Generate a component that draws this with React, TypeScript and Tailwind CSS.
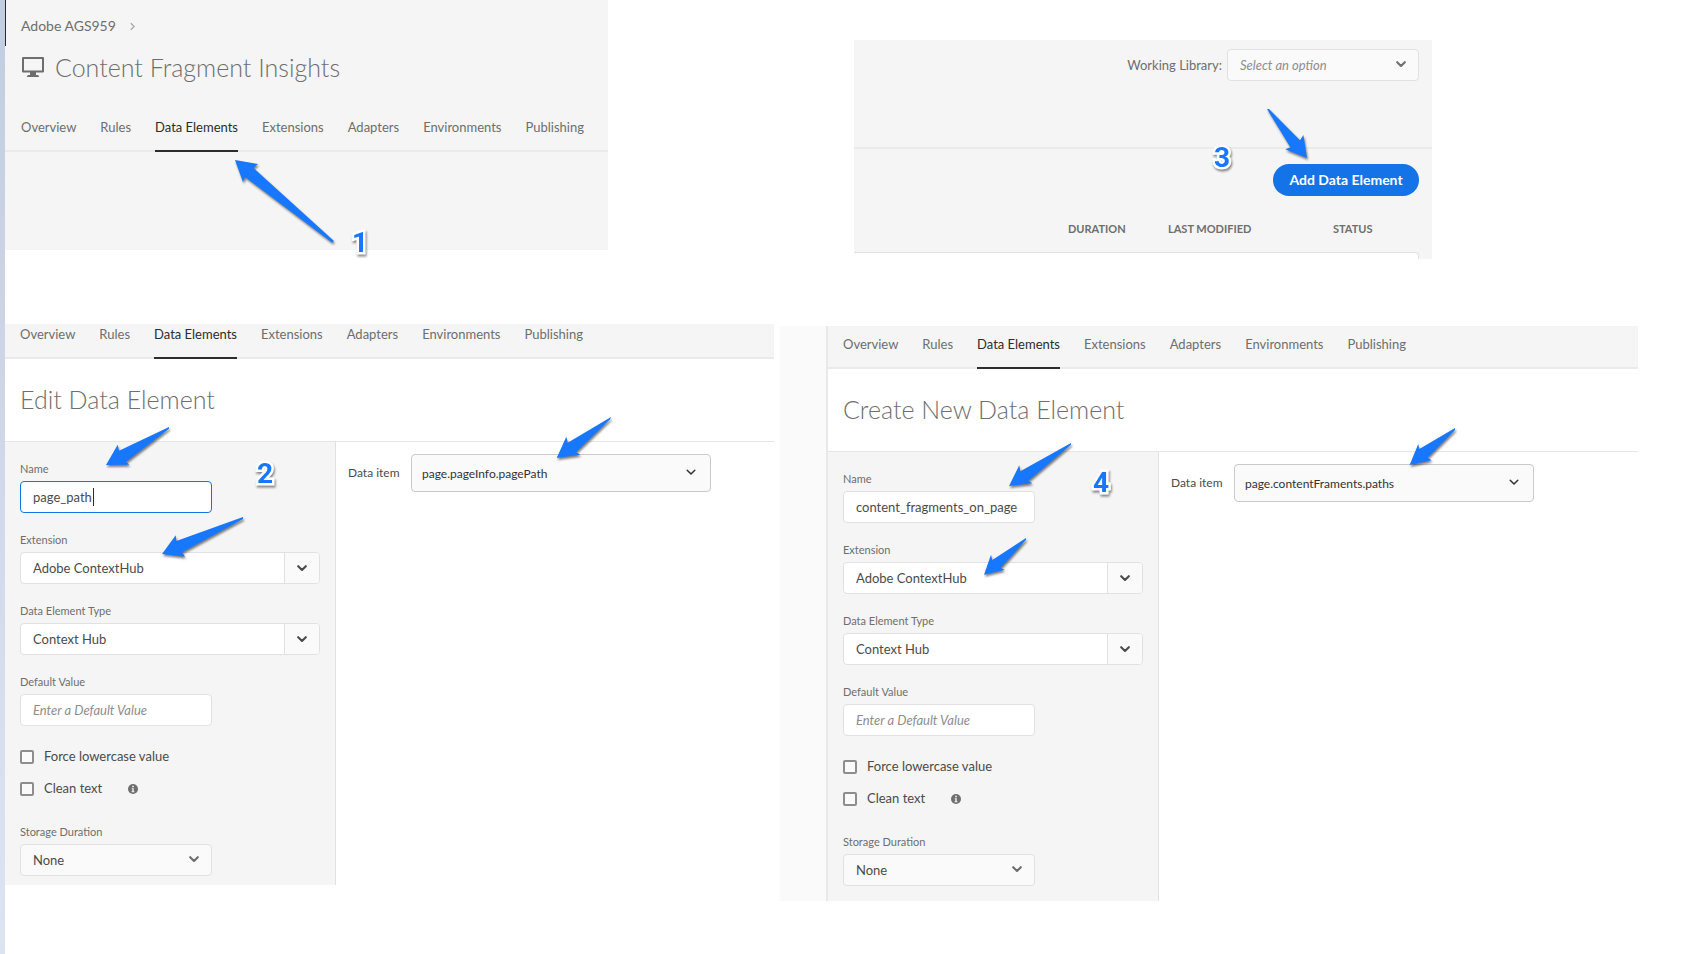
import type { ReactNode } from 'react'
import { useId } from 'react'

const TABS = ['Overview', 'Rules', 'Data Elements', 'Extensions', 'Adapters', 'Environments', 'Publishing']

function Tabs({ className }: { className: string }) {
  return (
    <nav className={`flex gap-6 border-b-2 border-[#eaeaea] text-[13px] leading-5 text-[#6e6e6e] ${className}`}>
      {TABS.map((tab) =>
        tab === 'Data Elements' ? (
          <a key={tab} href="#" aria-current="page" className="-mb-[2px] border-b-2 border-[#2c2c2c] pb-[13px] whitespace-nowrap text-[#2c2c2c]">
            {tab}
          </a>
        ) : (
          <a key={tab} href="#" className="whitespace-nowrap">
            {tab}
          </a>
        ),
      )}
    </nav>
  )
}

function Chevron({ className, thin = false }: { className: string; thin?: boolean }) {
  return (
    <svg viewBox="0 0 10 7" fill="none" stroke="currentColor" strokeLinecap="round" strokeLinejoin="round" className={`h-[7px] w-[10px] ${className}`} aria-hidden="true">
      <path d="M1.2 1.2 5 5 8.8 1.2" strokeWidth={thin ? 1.5 : 2.1} />
    </svg>
  )
}

function Arrow({ points, className }: { points: string; className: string }) {
  return (
    <svg viewBox="0 0 100 90" className={`pointer-events-none absolute z-10 h-[90px] w-[100px] overflow-visible drop-shadow-[1px_2px_1px_rgba(0,0,0,0.5)] ${className}`} aria-hidden="true">
      <polygon points={points} fill="#1877ff" />
    </svg>
  )
}

function Step({ children, className }: { children: ReactNode; className: string }) {
  return (
    <span
      className={`pointer-events-none absolute z-10 font-['Roboto','Liberation_Sans',sans-serif] text-[28px] leading-7 font-bold text-[#1877ff] drop-shadow-[1px_2px_1px_rgba(0,0,0,0.45)] [-webkit-text-stroke:5px_white] [paint-order:stroke_fill] ${className}`}
    >
      {children}
    </span>
  )
}

function Picker({ id, value, className, thin, italic }: { id: string; value: string; className: string; thin?: boolean; italic?: boolean }) {
  return (
    <div className={`relative ${className}`}>
      <select
        id={id}
        className={`size-full appearance-none rounded border bg-[#fafafa] pt-[2px] ${thin ? 'border-[#cacaca] px-[10px] text-xs text-[#323232]' : 'border-[#e1e1e1] px-3 text-[13px]'} ${italic ? 'text-[#8e8e8e] italic' : 'text-[#4b4b4b]'}`}
      >
        <option>{value}</option>
      </select>
      <Chevron thin={thin} className={`pointer-events-none absolute top-1/2 -mt-1 ${thin ? 'right-[15px] text-[#323232]' : 'right-[13px] text-[#6e6e6e]'}`} />
    </div>
  )
}

function Field({ label, id, children }: { label: string; id: string; children: ReactNode }) {
  return (
    <div className="mb-[19px] flex flex-col gap-1">
      <label htmlFor={id} className="text-[11px] leading-4 text-[#6e6e6e]">
        {label}
      </label>
      {children}
    </div>
  )
}

function Combo({ id, value }: { id: string; value: string }) {
  return (
    <div className="flex h-8 overflow-hidden rounded border border-[#e1e1e1] bg-white">
      <input id={id} defaultValue={value} className="min-w-0 flex-1 px-3 pt-[2px] text-[13px] text-[#4b4b4b]" />
      <button type="button" aria-label={`Show options for ${value}`} className="flex w-[35px] items-center justify-center border-l border-[#e1e1e1] bg-[#fafafa] text-[#4b4b4b]">
        <Chevron className="" />
      </button>
    </div>
  )
}

function Check({ id, label, children }: { id: string; label: string; children?: ReactNode }) {
  return (
    <div className="flex h-8 items-center">
      <input id={id} type="checkbox" className="size-[14px] appearance-none rounded-[2px] border-2 border-[#8e8e8e] bg-[#fafafa]" />
      <label htmlFor={id} className="ml-[10px] text-[13px] text-[#4b4b4b]">
        {label}
      </label>
      {children}
    </div>
  )
}

function InfoIcon() {
  return (
    <svg viewBox="0 0 10 10" className="ml-[26px] size-[10px]" aria-hidden="true">
      <circle cx="5" cy="5" r="5" fill="#6e6e6e" />
      <path d="M4.2 1.8h1.6v1.5H4.2zM3.7 4.2h2v3.1h.7v.9H3.6v-.9h.7V5.1h-.6z" fill="#f5f5f5" />
    </svg>
  )
}

interface EditorProps {
  title: string
  name: string
  focused?: boolean
  item: string
  tabs: string
  bottom: string
  overlay: ReactNode
}

function Editor({ title, name, focused, item, tabs, bottom, overlay }: EditorProps) {
  const id = useId()
  return (
    <div className="relative min-w-0 flex-1">
      <Tabs className={`bg-[#f5f5f5] px-[15px] ${tabs}`} />
      <h2 className="border-b border-[#e6e6e6] px-[15px] pt-[21px] pb-[23px] text-[25px] leading-[38px] font-light text-[#6e6e6e]">{title}</h2>
      <div className="flex">
        <form className={`w-[331px] shrink-0 border-r border-[#e1e1e1] bg-[#f5f5f5] px-[15px] pt-[19px] ${bottom}`}>
          <Field label="Name" id={`${id}name`}>
            <div className="relative h-8 w-48">
              <input id={`${id}name`} defaultValue={name} className={`size-full rounded border bg-white px-3 text-[13px] text-[#4b4b4b] ${focused ? 'border-[#1473e6]' : 'border-[#e1e1e1]'}`} />
              {focused && <span className="absolute top-[7px] left-[73px] h-[18px] w-px bg-[#2c2c2c]" />}
            </div>
          </Field>
          <Field label="Extension" id={`${id}ext`}>
            <Combo id={`${id}ext`} value="Adobe ContextHub" />
          </Field>
          <Field label="Data Element Type" id={`${id}type`}>
            <Combo id={`${id}type`} value="Context Hub" />
          </Field>
          <Field label="Default Value" id={`${id}default`}>
            <input id={`${id}default`} placeholder="Enter a Default Value" className="h-8 w-48 rounded border border-[#e1e1e1] bg-white px-3 text-[13px] placeholder:text-[#8e8e8e] placeholder:italic" />
          </Field>
          <div className="-mt-1 mb-[19px]">
            <Check id={`${id}lower`} label="Force lowercase value" />
            <Check id={`${id}clean`} label="Clean text">
              <InfoIcon />
            </Check>
          </div>
          <div className="flex flex-col gap-1">
            <label htmlFor={`${id}dur`} className="text-[11px] leading-4 text-[#6e6e6e]">
              Storage Duration
            </label>
            <Picker id={`${id}dur`} value="None" className="h-8 w-48" />
          </div>
        </form>
        <div className="flex min-w-0 flex-1 items-start px-3 pt-3">
          <label htmlFor={`${id}item`} className="mt-[9px] w-[63px] shrink-0 text-xs leading-5 text-[#4b4b4b]">
            Data item
          </label>
          <Picker id={`${id}item`} value={item} thin className="h-[38px] w-full max-w-[300px]" />
        </div>
      </div>
      {overlay}
    </div>
  )
}

export default function App() {
  return (
    <div className="flex min-h-screen bg-white font-['Lato','Open_Sans',sans-serif]">
      <div className="w-[5px] shrink-0 bg-linear-to-b from-[#c3cde1] to-[#dbe5f2]" />
      <main className="min-w-0 flex-1">
        <div className="grid grid-cols-[603fr_246fr_578fr_258fr] items-start">
          <section className="relative h-[250px] bg-[#f5f5f5]">
            <div className="absolute top-0 left-0 h-[46px] w-px bg-[#2c2c2c]" />
            <div className="flex items-center gap-[14px] px-4 pt-4 text-sm leading-5 text-[#6e6e6e]">
              <a href="#">Adobe AGS959</a>
              <svg viewBox="0 0 6 10" fill="none" stroke="#a8a8a8" strokeWidth="1.6" className="h-[9px] w-[5px]" aria-hidden="true">
                <path d="M1 1l4 4-4 4" />
              </svg>
            </div>
            <div className="flex items-center gap-[11px] px-[17px] pt-3">
              <svg viewBox="0 0 22 20" className="h-5 w-[22px]" fill="#6e6e6e" aria-hidden="true">
                <path fillRule="evenodd" d="M1 0h20a1 1 0 0 1 1 1v13.500a1 1 0 0 1-1 1h-7v2.500h1.500a1.500 1.500 0 0 1 1.500 1.500v.5H5v-.5A1.500 1.500 0 0 1 6.500 18H8v-2.500H1a1 1 0 0 1-1-1V1a1 1 0 0 1 1-1zM2 2v11.500h18V2z" />
              </svg>
              <h1 className="text-[25px] leading-[38px] font-light text-[#6e6e6e]">Content Fragment Insights</h1>
            </div>
            <Tabs className="px-4 pt-[31px]" />
            <Arrow className="top-[150px] left-[225px]" points="5,10 28,14 23.500,18 104,91 102,92.500 15,27 13,32" />
            <Step className="top-[229px] left-[347px]">1</Step>
          </section>

          <section className="relative col-start-3 mt-10 h-[219px] overflow-hidden bg-[#f5f5f5]">
            <div className="flex h-[107px] items-start justify-end gap-[5px] pt-[9px] pr-[13px]">
              <label htmlFor="library" className="text-[13px] leading-8 text-[#6e6e6e]">
                Working Library:
              </label>
              <Picker id="library" value="Select an option" italic className="h-8 w-48" />
            </div>
            <div className="flex justify-end border-t-2 border-[#eaeaea] pt-[15px] pr-[13px]">
              <button type="button" className="h-8 w-[146px] rounded-full bg-[#1473e6] text-sm font-bold text-white">
                Add Data Element
              </button>
            </div>
            <div className="pt-4 pr-[13px]">
              <table className="w-full table-fixed border-separate border-spacing-0">
                <thead>
                  <tr className="h-10 text-left text-[11px] leading-4 font-bold text-[#6e6e6e]">
                    <td />
                    <th className="w-[100px] pb-[6px]">DURATION</th>
                    <th className="w-[165px] pb-[6px]">LAST MODIFIED</th>
                    <th className="w-[86px] pb-[6px]">STATUS</th>
                  </tr>
                </thead>
                <tbody>
                  <tr>
                    <td colSpan={4} className="h-5 rounded-tr border-t border-r border-[#e1e1e1] bg-white" />
                  </tr>
                </tbody>
              </table>
            </div>
            <Arrow className="top-[60px] left-[403px]" points="10,9 12,9 43,40.300 46.400,35 50,58 28.200,49.300 33.400,47.300" />
            <Step className="top-[104px] left-[360px]">3</Step>
          </section>
        </div>

        <div className="mt-[65px] grid grid-cols-[769fr_6fr_858fr_52fr] items-start">
          <section className="flex">
            <Editor
              title="Edit Data Element"
              name="page_path"
              focused
              item="page.pageInfo.pagePath"
              tabs=""
              bottom="pb-[9px]"
              overlay={
                <>
                  <Arrow className="top-[96px] left-[95px]" points="6,45 17.700,24.700 19,30.700 69,7 69,8.700 26,41.700 29.300,44.700" />
                  <Arrow className="top-[186px] left-[145px]" points="12,44 25.700,25.300 26.300,31 93,7 93,9 32,42.300 35,46.700" />
                  <Arrow className="top-[86px] left-[545px]" points="6.700,48 16.300,26.700 17.700,32.700 61,7 60.300,9 26,42.300 30.300,44.700" />
                  <Step className="top-[136px] left-[252px]">2</Step>
                </>
              }
            />
          </section>
          <section className="col-start-3 mt-[2px] flex">
            <div className="w-12 shrink-0 border-r-2 border-[#e9e9e9] bg-[#fafafa]" />
            <Editor
              title="Create New Data Element"
              name="content_fragments_on_page"
              item="page.contentFraments.paths"
              tabs="pt-2"
              bottom="pb-[15px]"
              overlay={
                <>
                  <Arrow className="top-[104px] left-[172px]" points="9,56 19.300,35.300 20.300,41.300 71,13 71,14.700 28.300,50.700 32.300,53.300" />
                  <Arrow className="top-[204px] left-[152px]" points="4,44.700 11,24.700 12.300,30 46,8 46,9.700 20.700,38 24.700,39.700" />
                  <Arrow className="top-[94px] left-[572px]" points="9.600,45 18.300,24 19.300,29 55,8 55,10 27.500,37.700 31.700,40.300" />
                  <Step className="top-[143px] left-[265px]">4</Step>
                </>
              }
            />
          </section>
        </div>
      </main>
    </div>
  )
}
